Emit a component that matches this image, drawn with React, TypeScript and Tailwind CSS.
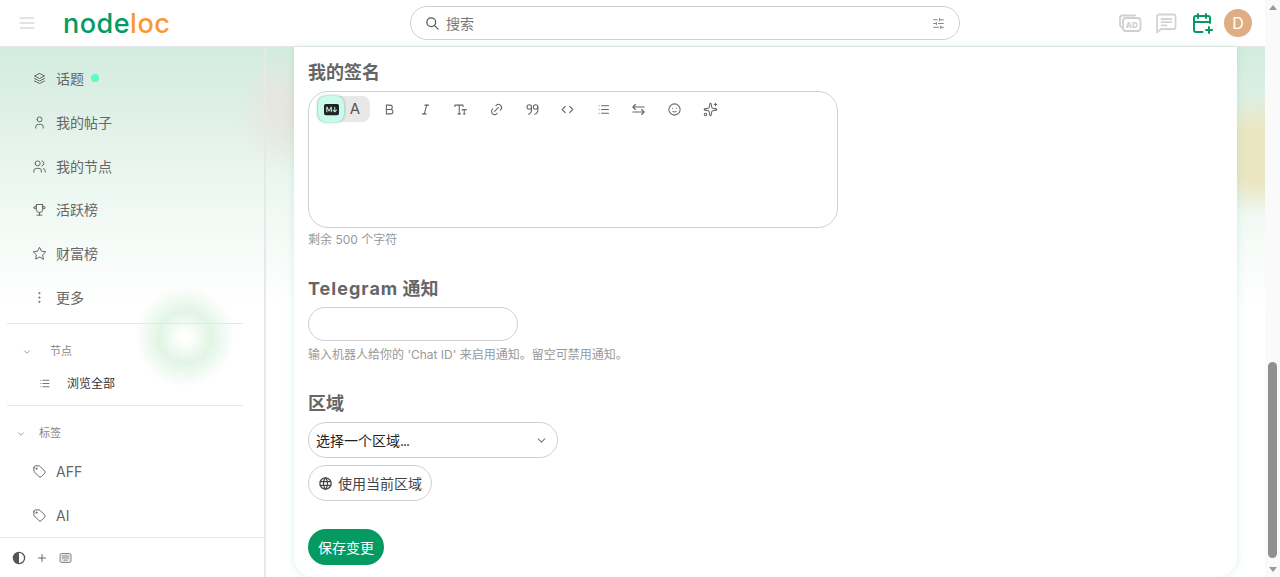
import { ReactNode } from 'react';
import { Sparkles, SlidersHorizontal } from 'lucide-react';
import {
  TbBold,
  TbCalendarPlus,
  TbChevronDown,
  TbDotsVertical,
  TbItalic,
  TbLink,
  TbList,
  TbMenu2,
  TbMoodSmile,
  TbPlus,
  TbSearch,
  TbStack2,
  TbStar,
  TbTag,
  TbTextSize,
  TbTrophy,
  TbUser,
  TbUsers,
  TbWorld,
} from 'react-icons/tb';
import { BsMarkdownFill } from 'react-icons/bs';

const AdIcon = () => (
  <svg width="24" height="24" viewBox="0 0 24 24" fill="none" stroke="#d0d0d0" strokeWidth="1.8">
    <path d="M4 16.5 C2.5 16 2 15 2 14 V7 C2 5.5 3 4.5 4.5 4.5 H17" strokeLinecap="round" />
    <rect x="5" y="7" width="17.5" height="13" rx="3" />
    <text x="13.8" y="16.6" textAnchor="middle" fontSize="8" fontWeight="800" fill="#d0d0d0" stroke="none" fontFamily="Inter, sans-serif">
      AD
    </text>
  </svg>
);

const MessageIcon = () => (
  <svg width="24" height="24" viewBox="0 0 24 24" fill="none" stroke="#d4d4d4" strokeWidth="1.8" strokeLinecap="round" strokeLinejoin="round">
    <path d="M3 5.5a2 2 0 0 1 2-2h14.5a2 2 0 0 1 2 2V16a2 2 0 0 1-2 2H7l-4 3.5Z" />
    <path d="M7.5 8h10M7.5 11.2h10M7.5 14.4h5" />
  </svg>
);

const SwapIcon = () => (
  <svg width="15" height="15" viewBox="0 0 24 24" fill="none" stroke="#666" strokeWidth="1.8" strokeLinecap="round" strokeLinejoin="round">
    <path d="M21 8H3M7 4 3 8l4 4M3 16h18M17 12l4 4-4 4" />
  </svg>
);

const QuoteIcon = () => (
  <svg width="15" height="15" viewBox="0 0 24 24" fill="none" stroke="#666" strokeWidth="1.7" strokeLinecap="round">
    <circle cx="6.8" cy="8" r="3.6" />
    <path d="M10.4 8v4c0 3.6-1.8 6.6-5 7.6" />
    <circle cx="17" cy="8" r="3.6" />
    <path d="M20.6 8v4c0 3.6-1.8 6.6-5 7.6" />
  </svg>
);

const CodeIcon = () => (
  <svg width="15" height="15" viewBox="0 0 24 24" fill="none" stroke="#666" strokeWidth="1.8" strokeLinecap="round" strokeLinejoin="round">
    <path d="M8.5 7l-5 5 5 5M15.5 7l5 5-5 5" />
  </svg>
);

const ThemeIcon = () => (
  <svg width="14" height="14" viewBox="0 0 14 14">
    <circle cx="7" cy="7" r="5.6" fill="none" stroke="#555" strokeWidth="1.3" />
    <path d="M7 1.4a5.6 5.6 0 0 0 0 11.2Z" fill="#555" />
  </svg>
);

const KeyboardIcon = () => (
  <svg width="13" height="12" viewBox="0 0 13 12" fill="#e6e6e6" stroke="#888" strokeWidth="1">
    <rect x="1" y="1.5" width="11" height="9" rx="1.5" />
    <path d="M3 4h7M3 6h7M4.5 8.2h4" strokeWidth="0.9" />
  </svg>
);

const NavItem = ({ icon, label, dot }: { icon: ReactNode; label: string; dot?: boolean }) => (
  <div className="flex h-[43.7px] items-center pl-[32px] text-[14px] text-[#666]">
    <span className="flex w-[24px] text-[15px] [&_svg]:stroke-[1.6]">{icon}</span>
    <span>{label}</span>
    {dot && <span className="ml-[7px] mb-[2px] h-[8px] w-[8px] rounded-full bg-[#5dfcc0]" />}
  </div>
);

const ToolButton = ({ children }: { children: ReactNode }) => (
  <span className="flex w-[35.6px] justify-center text-[15px] text-[#666] [&_svg]:stroke-[1.7]">{children}</span>
);

const App = () => {
  return (
    <div className="flex h-[577px] w-[1280px] overflow-hidden bg-white font-['Inter','Noto_Sans_CJK_SC',sans-serif]">
      <div className="flex min-w-0 flex-1 flex-col">
        {/* Header */}
        <header className="flex h-[47px] shrink-0 items-center border-b border-[#e8e8e8] bg-white">
          <TbMenu2 className="ml-[17px] text-[20px] text-[#d9d9d9]" />
          <span className="ml-[26px] w-[347px] text-[27px] leading-none font-medium tracking-[0.5px]">
            <span className="text-[#069a63]">node</span>
            <span className="text-[#fb9732]">loc</span>
          </span>
          <div className="flex h-[34px] w-[550px] items-center rounded-full border border-[#d0d0d0] px-[14px] text-[14px] text-[#777]">
            <TbSearch className="text-[15px] text-[#555]" />
            <span className="ml-[6px] flex-1">搜索</span>
            <SlidersHorizontal className="h-[13px] w-[13px] text-[#888]" />
          </div>
          <div className="ml-auto mr-[13px] flex items-center gap-[12px]">
            <AdIcon />
            <MessageIcon />
            <TbCalendarPlus className="text-[24px] text-[#069a63]" />
            <span className="-ml-[2px] flex h-[28px] w-[28px] items-center justify-center rounded-full bg-[#dfae82] text-[16px] text-white">D</span>
          </div>
        </header>

        <div className="flex min-h-0 flex-1 bg-[radial-gradient(circle_at_1260px_108px,#eae6c2_0,#eae6c2_28px,transparent_62px),radial-gradient(circle_at_295px_65px,#e9e2dc_0,transparent_62px),linear-gradient(to_bottom,#d3ebdf_0,#eef8f2_150px,#ffffff_260px)]">
          {/* Sidebar */}
          <aside className="relative flex w-[266px] shrink-0 flex-col border-r-2 border-[#e8e8e8]">
            <div className="absolute left-[135px] top-[240px] h-[100px] w-[100px] rounded-full bg-[radial-gradient(circle_closest-side,#ffffff_0,#fbfefb_14%,#e2f5e5_52%,transparent_100%)]" />
            <div className="relative flex min-h-0 flex-1 flex-col overflow-hidden pt-[10px]">
              <NavItem icon={<TbStack2 />} label="话题" dot />
              <NavItem icon={<TbUser />} label="我的帖子" />
              <NavItem icon={<TbUsers />} label="我的节点" />
              <NavItem icon={<TbTrophy />} label="活跃榜" />
              <NavItem icon={<TbStar />} label="财富榜" />
              <NavItem icon={<TbDotsVertical />} label="更多" />
              <div className="mx-[7px] mt-[3.5px] w-[236px] border-t border-[#e6e6e6]" />
              <div className="mt-[19px] flex h-[18px] items-center pl-[22px] text-[11px] text-[#888]">
                <TbChevronDown className="w-[28px] pr-[18px] text-[10px]" />
                <span>节点</span>
              </div>
              <div className="mt-[9px] flex h-[28px] items-center pl-[38px] text-[12px] text-[#333]">
                <TbList className="w-[29px] pr-[16px] text-[13px] text-[#777]" />
                <span>浏览全部</span>
              </div>
              <div className="mx-[7px] mt-[7px] w-[236px] border-t border-[#e6e6e6]" />
              <div className="mt-[19px] flex h-[18px] items-center pl-[16px] text-[11px] text-[#888]">
                <TbChevronDown className="w-[23px] pr-[13px] text-[10px]" />
                <span>标签</span>
              </div>
              <div className="mt-[7px]">
                <NavItem icon={<TbTag />} label="AFF" />
                <NavItem icon={<TbTag />} label="AI" />
              </div>
            </div>
            <div className="flex h-[40px] shrink-0 items-center border-t border-[#e6e6e6] bg-white pl-[12px] text-[#666]">
              <ThemeIcon />
              <TbPlus className="ml-[10px] text-[12px]" />
              <span className="ml-[11px] flex"><KeyboardIcon /></span>
            </div>
          </aside>

          {/* Main card */}
          <main className="ml-[28px] flex w-[943px] flex-col rounded-b-[20px] bg-white pl-[14px] pt-[14px] shadow-[0_0_8px_rgba(6,154,99,0.14)]">
            <h2 className="text-[18px] leading-[24px] font-bold text-[#666]">我的签名</h2>
            <div className="mt-[6px] h-[137px] w-[530px] rounded-[20px] border border-[#d0d0d0] pl-[8px] pt-[4px]">
              <div className="flex h-[26px] items-center">
                <div className="flex h-[26px] w-[53px] items-center rounded-[8px] bg-[#e8e8e8] pl-[1px]">
                  <span className="flex h-[26px] w-[26px] items-center justify-center rounded-[8px] bg-[#c8fbeb] shadow-[0_0_3px_rgba(6,154,99,0.6)]">
                    <BsMarkdownFill className="text-[15px] text-[#222]" />
                  </span>
                  <span className="flex-1 pr-[4px] text-center text-[15px] text-[#555]">A</span>
                </div>
                <div className="ml-[2px] flex items-center">
                  <ToolButton><TbBold /></ToolButton>
                  <ToolButton><TbItalic /></ToolButton>
                  <ToolButton><TbTextSize /></ToolButton>
                  <ToolButton><TbLink /></ToolButton>
                  <ToolButton><QuoteIcon /></ToolButton>
                  <ToolButton><CodeIcon /></ToolButton>
                  <ToolButton><TbList /></ToolButton>
                  <ToolButton><SwapIcon /></ToolButton>
                  <ToolButton><TbMoodSmile /></ToolButton>
                  <ToolButton><Sparkles className="h-[15px] w-[15px]" /></ToolButton>
                </div>
              </div>
            </div>
            <p className="mt-[4px] text-[12px] leading-[16px] text-[#999]">剩余 500 个字符</p>

            <h2 className="mt-[29px] text-[18px] leading-[24px] font-bold text-[#666]">
              <span className="tracking-[1px]">Telegram</span> 通知
            </h2>
            <div className="mt-[6px] h-[34px] w-[210px] rounded-full border border-[#d0d0d0]" />
            <p className="mt-[6px] text-[12px] leading-[16px] text-[#999]">输入机器人给你的 'Chat ID' 来启用通知。留空可禁用通知。</p>

            <h2 className="mt-[29px] text-[18px] leading-[24px] font-bold text-[#666]">区域</h2>
            <div className="mt-[6px] flex h-[36px] w-[250px] items-center justify-between rounded-full border border-[#d0d0d0] pl-[7px] pr-[9px] text-[14px] text-[#222]">
              <span>选择一个区域<span className="tracking-[-1px]">...</span></span>
              <TbChevronDown className="text-[13px] text-[#777]" />
            </div>
            <div className="mt-[7px] flex h-[36px] w-[124px] items-center rounded-full border border-[#d0d0d0] pl-[9px] text-[14px] text-[#444]">
              <TbWorld className="text-[15px]" />
              <span className="ml-[5px]">使用当前区域</span>
            </div>
            <button className="mt-[28px] h-[36px] w-[76px] rounded-full bg-[#069a63] text-[14px] text-white">保存变更</button>
          </main>
        </div>
      </div>

      {/* Scrollbar */}
      <div className="flex w-[15px] shrink-0 flex-col items-center bg-[#fafafa]">
        <div className="mt-[5px] h-0 w-0 border-x-[4.5px] border-b-[5px] border-x-transparent border-b-[#999]" />
        <div className="mt-[352px] h-[196px] w-[9px] rounded-full bg-[#8f8f8f]" />
        <div className="mt-[9px] h-0 w-0 border-x-[4.5px] border-t-[5px] border-x-transparent border-t-[#999]" />
      </div>
    </div>
  );
};

export default App;
